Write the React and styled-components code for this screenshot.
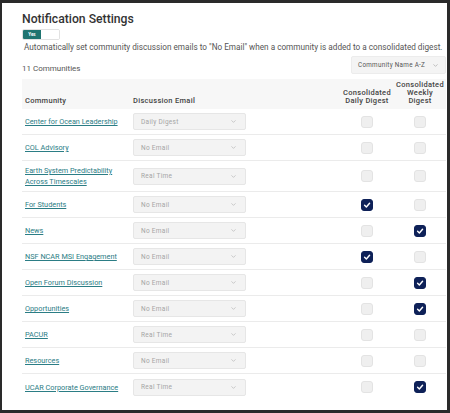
import React from 'react'
import styled, { createGlobalStyle } from 'styled-components'
import { ChevronDown } from 'lucide-react'

const GlobalStyle = createGlobalStyle`
    html, body { margin:0; padding:0; }
    body { font-family:Roboto, "Liberation Sans", sans-serif; background:#2a2a2a; }
`

const communities = [
    { name: 'Center for Ocean Leadership', email: 'Daily Digest', daily: false, weekly: false },
    { name: 'COL Advisory', email: 'No Email', daily: false, weekly: false },
    { name: 'Earth System Predictability Across Timescales', email: 'Real Time', daily: false, weekly: false },
    { name: 'For Students', email: 'No Email', daily: true, weekly: false },
    { name: 'News', email: 'No Email', daily: false, weekly: true },
    { name: 'NSF NCAR MSI Engagement', email: 'No Email', daily: true, weekly: false },
    { name: 'Open Forum Discussion', email: 'No Email', daily: false, weekly: true },
    { name: 'Opportunities', email: 'No Email', daily: false, weekly: true },
    { name: 'PACUR', email: 'Real Time', daily: false, weekly: false },
    { name: 'Resources', email: 'No Email', daily: false, weekly: false },
    { name: 'UCAR Corporate Governance', email: 'Real Time', daily: false, weekly: true },
]

function Check({ checked }) {
    return (
        <Box checked={checked}>
            {checked && (
                <svg width="8" height="8" viewBox="0 0 10 10">
                    <path d="M2 5.3 L4.2 7.4 L8.2 2.8" fill="none" stroke="#fff" strokeWidth="1.8" strokeLinecap="round" strokeLinejoin="round" />
                </svg>
            )}
        </Box>
    )
}

function App() {
    return (
        <>
            <GlobalStyle />
            <Frame>
                <Panel>
                    <Title>Notification Settings</Title>
                    <Toggle>
                        <ToggleOn>Yes</ToggleOn>
                        <ToggleOff />
                    </Toggle>
                    <Desc>Automatically set community discussion emails to "No Email" when a community is added to a consolidated digest.</Desc>
                    <Toolbar>
                        <Count>11 Communities</Count>
                        <Sort>
                            Community Name A-Z
                            <ChevronDown size={7} strokeWidth={2} color="#999" />
                        </Sort>
                    </Toolbar>
                    <Table>
                        <HeadRow>
                            <HeadCell>Community</HeadCell>
                            <HeadCell>Discussion Email</HeadCell>
                            <HeadCell center>Consolidated<br />Daily Digest</HeadCell>
                            <HeadCell center>Consolidated<br />Weekly<br />Digest</HeadCell>
                        </HeadRow>
                        {communities.map((c, i) => (
                            <Row key={c.name} last={i === communities.length - 1}>
                                <Cell><Link href="#">{c.name}</Link></Cell>
                                <Cell>
                                    <Select>
                                        {c.email}
                                        <ChevronDown size={7} strokeWidth={2} color="#aaa" />
                                    </Select>
                                </Cell>
                                <Cell center><Check checked={c.daily} /></Cell>
                                <Cell center><Check checked={c.weekly} /></Cell>
                            </Row>
                        ))}
                    </Table>
                </Panel>
            </Frame>
        </>
    )
}

export default App

const Frame = styled.div`
    width:450px;
    height:413px;
    box-sizing:border-box;
    padding:3px 3px 3px 2px;
    background:#2a2a2a;
    overflow:hidden;
`
const Panel = styled.div`
    height:100%;
    box-sizing:border-box;
    background:#fff;
    padding:9px 1px 0 20px;
    overflow:hidden;
`
const Title = styled.div`
    font-size:12.2px;
    line-height:15px;
    color:#333;
    font-weight:500;
`
const Toggle = styled.div`
    display:flex;
    width:36px;
    height:9px;
    margin-top:2px;
    border:1px solid #e2e2e2;
    border-radius:2px;
    overflow:hidden;
`
const ToggleOn = styled.div`
    width:18px;
    background:#1f7470;
    color:#fff;
    font-size:4.5px;
    font-weight:700;
    display:flex;
    align-items:center;
    justify-content:center;
`
const ToggleOff = styled.div`
    flex:1;
    background:#fff;
`
const Desc = styled.div`
    margin-top:2px;
    padding-left:2px;
    font-size:8.2px;
    line-height:10px;
    color:#555;
    white-space:nowrap;
`
const Toolbar = styled.div`
    display:flex;
    justify-content:space-between;
    align-items:flex-end;
    margin-top:4px;
`
const Count = styled.div`
    font-size:8px;
    line-height:10px;
    color:#555;
`
const Sort = styled.div`
    display:flex;
    align-items:center;
    justify-content:space-between;
    width:95px;
    height:18px;
    box-sizing:border-box;
    padding:0 6px 0 6px;
    background:#f4f4f4;
    border:1px solid #ececec;
    border-radius:2px;
    font-size:6.3px;
    letter-spacing:0.3px;
    color:#555;
    white-space:nowrap;
`
const Table = styled.div`
    margin-top:5px;
    width:424px;
`
const HeadRow = styled.div`
    display:grid;
    grid-template-columns:108px 210px 54px 52px;
    align-items:end;
    height:30px;
    box-sizing:border-box;
    padding-bottom:4px;
    background:#f7f7f7;
`
const HeadCell = styled.div`
    font-size:7.5px;
    line-height:8px;
    letter-spacing:0.3px;
    font-weight:500;
    color:#444;
    padding-left:${p => p.center ? '0' : '3px'};
    text-align:${p => p.center ? 'center' : 'left'};
`
const Row = styled.div`
    display:grid;
    grid-template-columns:108px 210px 54px 52px;
    align-items:center;
    min-height:26px;
    box-sizing:border-box;
    padding:4px 0;
    border-bottom:${p => p.last ? 'none' : '1px solid #ebebeb'};
`
const Cell = styled.div`
    display:flex;
    justify-content:${p => p.center ? 'center' : 'flex-start'};
    padding-left:${p => p.center ? '0' : '3px'};
`
const Link = styled.a`
    font-size:7.3px;
    line-height:11px;
    color:#2b7d85;
    text-decoration:underline;
    padding-right:4px;
`
const Select = styled.div`
    display:flex;
    align-items:center;
    justify-content:space-between;
    width:113px;
    height:17px;
    box-sizing:border-box;
    padding:0 8px 0 7px;
    background:#f3f3f3;
    border:1px solid #e6e6e6;
    border-radius:2px;
    font-size:6.5px;
    letter-spacing:0.3px;
    color:#a5a5a5;
`
const Box = styled.div`
    width:12px;
    height:12px;
    box-sizing:border-box;
    border-radius:3px;
    display:flex;
    align-items:center;
    justify-content:center;
    background:${p => p.checked ? '#0e2158' : '#efefef'};
    border:1px solid ${p => p.checked ? '#0e2158' : '#e3e3e3'};
`
